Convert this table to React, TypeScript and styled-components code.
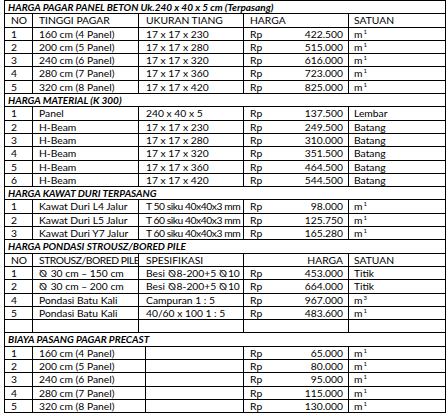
import React from 'react';
import styled, { createGlobalStyle } from 'styled-components';

const GlobalStyle = createGlobalStyle`
  html, body {
    margin: 0;
    padding: 0;
    background: #fff;
  }
  body {
    font-family: Lato, 'Liberation Sans', sans-serif;
    color: #000;
  }
`;

// NO | name | (gap) | spec | Rp | amount | unit
const Sheet = styled.div`
  display: grid;
  grid-template-columns: 28px 106px 7px 98px 22px 83px 97px;
  grid-auto-rows: 13.3px;
  width: max-content;
  margin-left: 4px;
  border-left: 1px solid #000;
  border-top: 1px solid #000;
  font-size: 10.3px;
  line-height: 12.3px;
`;

const Cell = styled.div<{
  $span?: number;
  $right?: boolean;
  $open?: boolean;
  $pad?: number;
  $tight?: boolean;
}>`
  grid-column: span ${(p) => p.$span ?? 1};
  box-sizing: border-box;
  padding: 0 ${(p) => (p.$right ? 5 : 0)}px 0 ${(p) => (p.$right ? 0 : p.$pad ?? 6)}px;
  text-align: ${(p) => (p.$right ? 'right' : 'left')};
  letter-spacing: ${(p) => (p.$tight ? '-0.45px' : '0')};
  border-right: ${(p) => (p.$open ? 'none' : '1px solid #000')};
  border-bottom: 1px solid #000;
  white-space: nowrap;
  overflow: hidden;
`;

const Title = styled.div`
  grid-column: span 7;
  box-sizing: border-box;
  padding-left: 3px;
  border-right: 1px solid #000;
  border-bottom: 1px solid #000;
  font-size: 10px;
  font-weight: 700;
  font-style: italic;
  white-space: nowrap;
`;

const Sup = styled.sup`
  font-size: 6px;
  line-height: 0;
  vertical-align: 4px;
  margin-left: 1px;
`;

const Dia = styled.span`
  font-family: 'DejaVu Sans', sans-serif;
  font-size: 10px;
  margin-right: 1px;
`;

type Row = {
  no?: string;
  name?: React.ReactNode;
  spec?: React.ReactNode;
  amount?: string;
  unit?: React.ReactNode;
  rp?: boolean;
  tightName?: boolean;
  tightSpec?: boolean;
};

const m1 = (
  <>
    m<Sup>1</Sup>
  </>
);
const m3 = (
  <>
    m<Sup>3</Sup>
  </>
);
const d = <Dia>⦰</Dia>;

const DataRow = ({ row, wide }: { row: Row; wide?: boolean }) => (
  <>
    <Cell>{row.no}</Cell>
    <Cell $span={wide ? 2 : 1} $tight={row.tightName}>
      {row.name}
    </Cell>
    <Cell $span={wide ? 1 : 2} $pad={7} $tight={row.tightSpec}>
      {row.spec}
    </Cell>
    <Cell $open>{row.rp === false ? '' : 'Rp'}</Cell>
    <Cell $right>{row.amount}</Cell>
    <Cell $pad={5}>{row.unit}</Cell>
  </>
);

const pagar: Row[] = [
  { no: '1', name: '160 cm (4 Panel)', spec: '17 x 17 x 230', amount: '422.500', unit: m1 },
  { no: '2', name: '200 cm (5 Panel)', spec: '17 x 17 x 280', amount: '515.000', unit: m1 },
  { no: '3', name: '240 cm (6 Panel)', spec: '17 x 17 x 320', amount: '616.000', unit: m1 },
  { no: '4', name: '280 cm (7 Panel)', spec: '17 x 17 x 360', amount: '723.000', unit: m1 },
  { no: '5', name: '320 cm (8 Panel)', spec: '17 x 17 x 420', amount: '825.000', unit: m1 },
];

const material: Row[] = [
  { no: '1', name: 'Panel', spec: '240 x 40 x 5', amount: '137.500', unit: 'Lembar' },
  { no: '2', name: 'H-Beam', spec: '17 x 17 x 230', amount: '249.500', unit: 'Batang' },
  { no: '3', name: 'H-Beam', spec: '17 x 17 x 280', amount: '310.000', unit: 'Batang' },
  { no: '4', name: 'H-Beam', spec: '17 x 17 x 320', amount: '351.500', unit: 'Batang' },
  { no: '5', name: 'H-Beam', spec: '17 x 17 x 360', amount: '464.500', unit: 'Batang' },
  { no: '6', name: 'H-Beam', spec: '17 x 17 x 420', amount: '544.500', unit: 'Batang' },
];

const kawat: Row[] = [
  { no: '1', name: 'Kawat Duri L4 Jalur', spec: 'T 50 siku 40x40x3 mm', tightSpec: true, amount: '98.000', unit: m1 },
  { no: '2', name: 'Kawat Duri L5 Jalur', spec: 'T 60 siku 40x40x3 mm', tightSpec: true, amount: '125.750', unit: m1 },
  { no: '3', name: 'Kawat Duri Y7 Jalur', spec: 'T 60 siku 40x40x3 mm', tightSpec: true, amount: '165.280', unit: m1 },
];

const pondasi: Row[] = [
  {
    no: 'NO',
    name: 'STROUSZ/BORED PILE',
    tightName: true,
    spec: 'SPESIFIKASI',
    rp: false,
    amount: 'HARGA',
    unit: 'SATUAN',
  },
  {
    no: '1',
    name: <>{d} 30 cm – 150 cm</>,
    spec: <>Besi {d}8-200+5 {d}10</>,
    amount: '453.000',
    unit: 'Titik',
  },
  {
    no: '2',
    name: <>{d} 30 cm – 200 cm</>,
    spec: <>Besi {d}8-200+5 {d}10</>,
    amount: '664.000',
    unit: 'Titik',
  },
  { no: '4', name: 'Pondasi Batu Kali', spec: 'Campuran 1 : 5', amount: '967.000', unit: m3 },
  { no: '5', name: 'Pondasi Batu Kali', spec: '40/60 x 100 1 : 5', amount: '483.600', unit: m1 },
  { rp: false },
];

const precast: Row[] = [
  { no: '1', name: '160 cm (4 Panel)', amount: '65.000', unit: m1 },
  { no: '2', name: '200 cm (5 Panel)', amount: '80.000', unit: m1 },
  { no: '3', name: '240 cm (6 Panel)', amount: '95.000', unit: m1 },
  { no: '4', name: '280 cm (7 Panel)', amount: '115.000', unit: m1 },
  { no: '5', name: '320 cm (8 Panel)', amount: '130.000', unit: m1 },
];

export default function App() {
  return (
    <>
      <GlobalStyle />
      <Sheet>
        <Title>HARGA PAGAR PANEL BETON Uk.240 x 40 x 5 cm (Terpasang)</Title>
        <Cell>NO</Cell>
        <Cell>TINGGI PAGAR</Cell>
        <Cell $span={2} $pad={7}>
          UKURAN TIANG
        </Cell>
        <Cell $span={2}>HARGA</Cell>
        <Cell $pad={5}>SATUAN</Cell>
        {pagar.map((r) => (
          <DataRow key={r.no} row={r} />
        ))}

        <Title>HARGA MATERIAL (K 300)</Title>
        {material.map((r) => (
          <DataRow key={r.no} row={r} />
        ))}

        <Title>HARGA KAWAT DURI TERPASANG</Title>
        {kawat.map((r) => (
          <DataRow key={r.no} row={r} />
        ))}

        <Title>HARGA PONDASI STROUSZ/BORED PILE</Title>
        {pondasi.map((r, i) => (
          <DataRow key={i} row={r} />
        ))}

        <Title>BIAYA PASANG PAGAR PRECAST</Title>
        {precast.map((r) => (
          <DataRow key={r.no} row={r} wide />
        ))}
      </Sheet>
    </>
  );
}
